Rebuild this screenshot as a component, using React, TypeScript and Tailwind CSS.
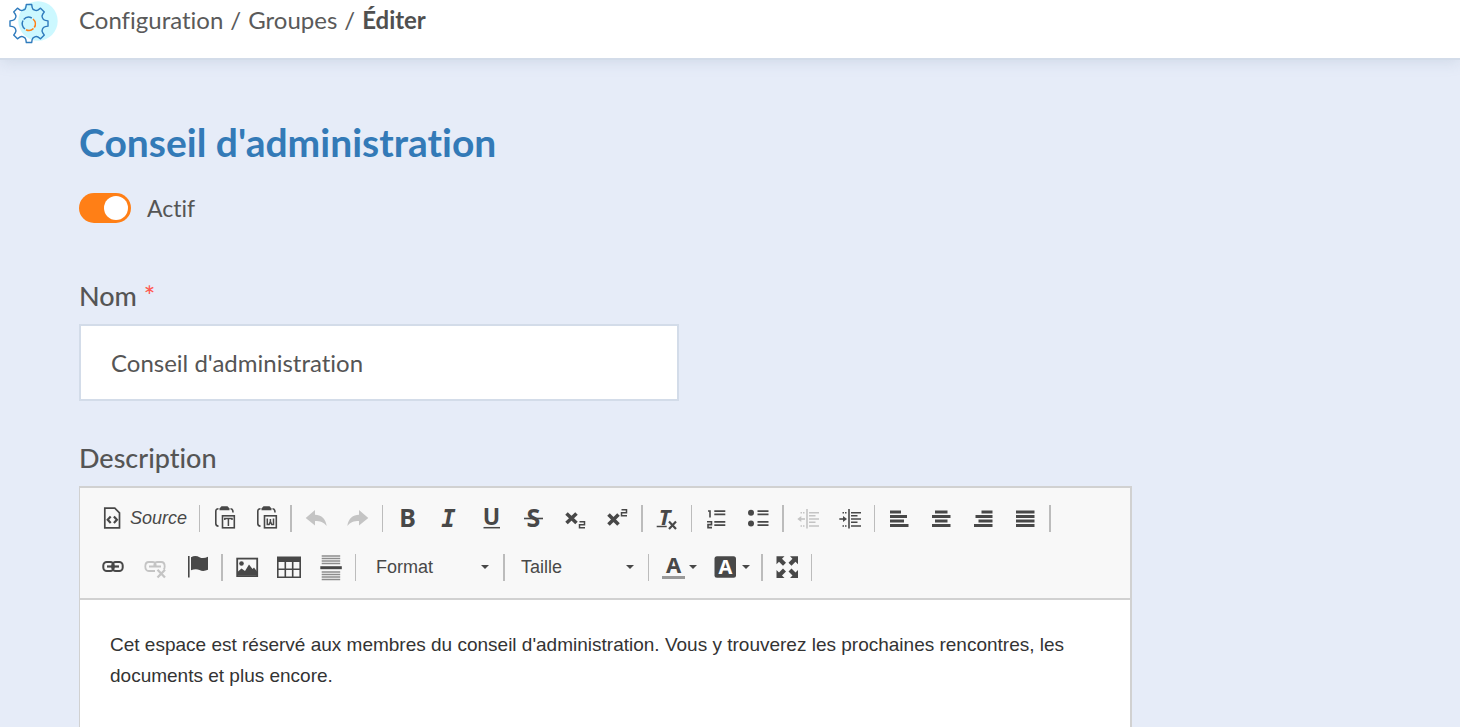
import type { ReactNode } from "react";

interface IconProps {
  children: ReactNode;
}

const Icon = ({ children }: IconProps) => (
  <svg
    viewBox="0 0 24 24"
    className="h-6 w-6 shrink-0 overflow-visible"
    fill="none"
    stroke="currentColor"
    strokeWidth="1.6"
    aria-hidden="true"
  >
    {children}
  </svg>
);

interface GlyphProps {
  x: number;
  y: number;
  size: number;
  italic?: boolean;
  mono?: boolean;
  fill?: string;
  children: ReactNode;
}

const Glyph = ({ x, y, size, italic, mono, fill = "currentColor", children }: GlyphProps) => (
  <text
    x={x}
    y={y}
    fontSize={size}
    fontWeight="700"
    fontStyle={italic ? "italic" : "normal"}
    fontFamily={mono ? "'DejaVu Sans Mono', monospace" : "'Noto Sans', 'Open Sans', sans-serif"}
    textAnchor="middle"
    fill={fill}
    stroke="none"
  >
    {children}
  </text>
);

interface ToolProps {
  label: string;
  disabled?: boolean;
  children: ReactNode;
}

const Tool = ({ label, disabled, children }: ToolProps) => (
  <button
    type="button"
    aria-label={label}
    disabled={disabled}
    className="flex h-10 w-[42px] shrink-0 items-center justify-center text-[#484848] disabled:text-[#c4c4c4]"
  >
    <Icon>{children}</Icon>
  </button>
);

const Separator = () => (
  <span className="flex w-[7px] shrink-0 justify-center">
    <span className="h-[27px] w-px bg-[#bcbcbc]" />
  </span>
);

const WideSeparator = () => (
  <span className="flex w-2 shrink-0 justify-center">
    <span className="h-[27px] w-0.5 bg-[#bcbcbc]" />
  </span>
);

const Caret = () => (
  <svg viewBox="0 0 8 4" className="h-1 w-2 shrink-0" fill="#484848" aria-hidden="true">
    <path d="M0 0h8L4 4z" />
  </svg>
);

const Combo = ({ label }: { label: string }) => (
  <div className="relative h-10 w-[137px] shrink-0">
    <select
      aria-label={label}
      className="h-full w-full appearance-none bg-transparent px-[13px] text-lg text-[#484848]"
    >
      <option>{label}</option>
    </select>
    <span className="pointer-events-none absolute inset-y-0 right-[11px] flex items-center">
      <Caret />
    </span>
  </div>
);

/* Shared clipboard outline of the two paste buttons */
const Clipboard = () => (
  <>
    <path d="M6.5 2.8C4.5 2.8 3.8 4 3.8 5.5v12c0 1.6.7 2.6 2.7 2.6" />
    <path d="M18.5 2.8c1.8 0 2.5 1 2.5 3.7" />
    <path d="M7.5 4.3V2.5L9.5.3h6l2 2.2v1.8z" fill="currentColor" stroke="none" />
    <rect x="10.5" y="9.8" width="11.8" height="12" />
  </>
);

const ListLines = ({ x }: { x: number }) => (
  <path
    d={`M${x} 5.2h11M${x} 8.4h11M${x} 15.8h11M${x} 19.2h11`}
    strokeWidth="1.7"
  />
);

const IndentLines = () => (
  <>
    <path d="M11 3v19.5" />
    <path d="M13 6.7h10M13 9.8h6.5M13 13h10M13 16.3h6.5M13 20h10" strokeWidth="1.5" />
    <path d="M4.5 6.7h5M4.5 20h5" strokeDasharray="1.5 1" />
  </>
);

const polar = (deg: number, r: number) => {
  const rad = (deg * Math.PI) / 180;
  return `${(29 + r * Math.cos(rad)).toFixed(2)} ${(23.5 + r * Math.sin(rad)).toFixed(2)}`;
};

const gearPath =
  "M" +
  [0, 45, 90, 135, 180, 225, 270, 315]
    .map(
      (a) =>
        `${polar(a - 11, 16.5)} L${polar(a - 8, 19.2)} L${polar(a + 8, 19.2)} L${polar(a + 11, 16.5)} Q${polar(a + 14, 14.5)} ${polar(a + 22.5, 14.6)} Q${polar(a + 31, 14.5)} ${polar(a + 34, 16.5)}`
    )
    .join(" L") +
  "Z";

const Logo = () => (
  <svg viewBox="0 0 60 44" className="h-11 w-[60px] shrink-0" fill="none" aria-hidden="true">
    <circle cx="38" cy="21" r="19.7" fill="#ccf8ff" />
    <path d={gearPath} stroke="#2f7bbd" strokeWidth="1.4" strokeLinejoin="round" />
    <path
      d="M25 29A6.5 6.5 0 0 1 23 20.5M23.7 19.5A6.5 6.5 0 0 1 31.8 18"
      stroke="#2f7bbd"
      strokeWidth="1.5"
    />
    <path
      d="M33 19A6.5 6.5 0 0 1 34.3 27.5M33.5 28.5A6.5 6.5 0 0 1 26 29.7"
      stroke="#ff7f16"
      strokeWidth="1.6"
    />
  </svg>
);

const Header = () => (
  <header className="flex h-[60px] shrink-0 items-start border-b-2 border-[#d3dce9] bg-white shadow-[0_2px_14px_rgba(120,140,170,0.2)]">
    <Logo />
    <nav
      aria-label="Fil d'Ariane"
      className="flex h-10 items-center gap-[7px] pl-[19px] text-2xl text-[#5a5a5a]"
    >
      <a href="#configuration">Configuration</a>
      <span>/</span>
      <a href="#groupes">Groupes</a>
      <span>/</span>
      <span className="font-bold text-[#505050]">Éditer</span>
    </nav>
  </header>
);

const Toolbar = () => (
  <div
    role="toolbar"
    aria-label="Mise en forme"
    className="border-b-2 border-[#d1d1d1] bg-[#f8f8f8] pt-[5px] pb-[7px] pl-3"
  >
    <div className="flex h-[50px] items-center">
      <button
        type="button"
        className="flex h-10 w-[104px] shrink-0 items-center gap-[6px] pl-2 text-lg text-[#484848] italic"
      >
        <Icon>
          <path d="M4.8 2.2h10l4.7 4.7v15H4.8z" strokeWidth="1.7" />
          <path d="M10.7 10.5l-3 3.2 3 3.2M13.9 10.5l3 3.2-3 3.2" strokeWidth="2.2" />
        </Icon>
        Source
      </button>
      <Separator />
      <Tool label="Coller comme texte">
        <Clipboard />
        <path d="M12.8 14v-1.5H20V14M16.4 12.5V20" strokeWidth="1.5" />
      </Tool>
      <Tool label="Coller depuis Word">
        <Clipboard />
        <path d="M13.3 12.5v6h1.8l1.3-3 1.3 3h1.8v-6M16.4 13v3" strokeWidth="1.5" />
      </Tool>
      <WideSeparator />
      <Tool label="Annuler" disabled>
        <path d="M1.7 12L11 4v4.8c6 0 10.5 3.7 11.7 11.2-3.2-3.8-6.5-5-11.7-5v4.5z" fill="currentColor" stroke="none" />
      </Tool>
      <Tool label="Rétablir" disabled>
        <path d="M22.3 12L13 4v4.8C7 8.8 2.5 12.5 1.3 20c3.2-3.8 6.5-5 11.7-5v4.5z" fill="currentColor" stroke="none" />
      </Tool>
      <Separator />
      <Tool label="Gras">
        <Glyph x={12.5} y={21} size={25}>B</Glyph>
      </Tool>
      <Tool label="Italique">
        <Glyph x={11.5} y={21} size={24} italic mono>I</Glyph>
      </Tool>
      <Tool label="Souligné">
        <Glyph x={12.5} y={18.5} size={23}>U</Glyph>
        <path d="M4.5 21.7H21" strokeWidth="1.5" />
      </Tool>
      <Tool label="Barré">
        <Glyph x={12.5} y={21} size={25}>S</Glyph>
        <path d="M3 12.5h19" />
      </Tool>
      <Tool label="Indice">
        <path d="M3.5 7.5l10 9.5M13.5 7.5l-10 9.5" strokeWidth="3.6" />
        <path d="M16.5 15.8h5v2.9h-5v3H22" strokeWidth="1.5" />
      </Tool>
      <Tool label="Exposant">
        <path d="M3.5 8.5l10 10M13.5 8.5l-10 10" strokeWidth="3.6" />
        <path d="M16.5 3.8h5v2.9h-5v3H22" strokeWidth="1.5" />
      </Tool>
      <WideSeparator />
      <Tool label="Supprimer la mise en forme">
        <Glyph x={9.5} y={18.5} size={22} italic>T</Glyph>
        <path d="M1.7 20.5h10" strokeWidth="1.5" />
        <path d="M14 15.5l7 7.5M21 15.5L14 23" strokeWidth="2.2" />
      </Tool>
      <Separator />
      <Tool label="Liste numérotée">
        <path d="M4 5h2v6.5M3 15.8h4.5v2.8H4v3h4" />
        <ListLines x={10.3} />
      </Tool>
      <Tool label="Liste à puces">
        <circle cx="5" cy="6.8" r="3" fill="currentColor" stroke="none" />
        <circle cx="5" cy="17.5" r="3" fill="currentColor" stroke="none" />
        <ListLines x={11.5} />
      </Tool>
      <WideSeparator />
      <Tool label="Diminuer le retrait" disabled>
        <IndentLines />
        <path d="M3 13h6" />
        <path d="M1.3 13l4-3v6z" fill="currentColor" stroke="none" />
      </Tool>
      <Tool label="Augmenter le retrait">
        <IndentLines />
        <path d="M1.3 13H7" />
        <path d="M9 13l-4-3v6z" fill="currentColor" stroke="none" />
      </Tool>
      <Separator />
      <Tool label="Aligner à gauche">
        <path d="M3 6h11M3 10.5h17M3 15h14M3 19.5h18.5" strokeWidth="3" />
      </Tool>
      <Tool label="Centrer">
        <path d="M6 6h12.5M3 10.5h18.5M6 15h12.5M3 19.5h18.5" strokeWidth="3" />
      </Tool>
      <Tool label="Aligner à droite">
        <path d="M10.5 6h11M4.5 10.5h17M7.5 15h14M3 19.5h18.5" strokeWidth="3" />
      </Tool>
      <Tool label="Justifier">
        <path d="M3 6h18.5M3 10.5h18.5M3 15h18.5M3 19.5h18.5" strokeWidth="3" />
      </Tool>
      <WideSeparator />
    </div>

    <div className="flex h-12 items-center">
      <Tool label="Lien">
        <rect x="2.3" y="7" width="10.5" height="9" rx="3.5" strokeWidth="2" />
        <rect x="11.2" y="7" width="10.5" height="9" rx="3.5" strokeWidth="2" />
        <path d="M6 11.5h12" strokeWidth="2.2" />
      </Tool>
      <Tool label="Supprimer le lien" disabled>
        <path
          d="M12 16H5.8C3.5 16 2.3 14 2.3 11.5S3.5 7 5.8 7h3.5c2.3 0 3.5 2 3.5 4.5M11.2 11.5C11.2 9 12.4 7 14.7 7h3.5c2.3 0 3.5 2 3.5 4.5 0 1.5-.5 2.5-1 3M6 11.5h12"
          strokeWidth="1.8"
        />
        <path d="M14.5 14.8l7.5 7.7M22 14.8l-7.5 7.7" strokeWidth="2.3" />
      </Tool>
      <Tool label="Ancre">
        <path d="M3.8 1v21.5" />
        <path d="M6 2.2c3-1.6 6-1.4 8.5 0s5.5 1 8.5-.4v13c-3 1.3-6 1.5-8.5.2s-5.5-1-8.5.2z" fill="currentColor" stroke="none" />
      </Tool>
      <WideSeparator />
      <Tool label="Image">
        <rect x="2.2" y="3.6" width="20" height="17.5" strokeWidth="1.8" />
        <circle cx="6.5" cy="8.5" r="2.3" fill="currentColor" stroke="none" />
        <path d="M3 20.5v-4l3.5-3 3.5 2.5 4-6.5 3.5 4.5 1.5-1.5 3 4v4z" fill="currentColor" stroke="none" />
      </Tool>
      <Tool label="Tableau">
        <path d="M0 1.5h24V7H0z" fill="currentColor" stroke="none" />
        <path d="M.8 5v17.2h22.4V5M8.3 6v16M15.7 6v16M0 14.3h24" />
      </Tool>
      <Tool label="Saut de page">
        <path
          d="M2.7 1h18.5M2.7 3.5h18.5M2.7 6h18.5M2.7 8.5h18.5M2.7 17h18.5M2.7 19.5h18.5M2.7 22h18.5M2.7 24.5h18.5"
          stroke="#8d8d8d"
          strokeWidth="1.3"
        />
        <path d="M1.3 12.7h21.5" strokeWidth="3" />
      </Tool>
      <Separator />
      <div className="pl-1">
        <Combo label="Format" />
      </div>
      <WideSeparator />
      <Combo label="Taille" />
      <Separator />
      <button
        type="button"
        aria-label="Couleur du texte"
        className="flex h-10 w-[53px] shrink-0 items-center gap-1 pl-[9px] text-[#484848]"
      >
        <Icon>
          <Glyph x={12.5} y={18} size={22}>A</Glyph>
          <path d="M1 22.5h23" stroke="#999" strokeWidth="3" />
        </Icon>
        <Caret />
      </button>
      <button
        type="button"
        aria-label="Couleur d'arrière-plan"
        className="flex h-10 w-[53px] shrink-0 items-center gap-1 pl-[9px] text-[#484848]"
      >
        <Icon>
          <rect x=".5" y="1.3" width="21.5" height="21.5" rx="2.5" fill="currentColor" stroke="none" />
          <Glyph x={11.3} y={19} size={20} fill="#fff">A</Glyph>
        </Icon>
        <Caret />
      </button>
      <WideSeparator />
      <Tool label="Agrandir">
        <path
          d="M1.5 1.3h8L7 3.8l4 4-3 3-4-4-2.5 2.5zM23 1.3h-8l2.5 2.5-4 4 3 3 4-4L23 9.3zM1.5 23h8L7 20.5l4-4-3-3-4 4L1.5 15zM23 23h-8l2.5-2.5-4-4 3-3 4 4L23 15z"
          fill="currentColor"
          stroke="none"
        />
      </Tool>
      <Separator />
    </div>
  </div>
);

const App = () => {
  return (
    <div className="flex min-h-screen flex-col bg-[#e6ecf8] font-['Lato',sans-serif] text-[#555] [font-variant-ligatures:none]">
      <Header />

      <main className="flex flex-1 flex-col px-[79px] pt-[58px]">
        <h1 className="text-[39px] leading-[48px] font-bold text-[#337ab7]">
          Conseil d'administration
        </h1>

        <label className="mt-[26px] flex h-8 items-center gap-4 self-start text-[23px]">
          <input
            type="checkbox"
            defaultChecked
            className="h-[30px] w-[52px] appearance-none rounded-full bg-gray-400 p-[3px] before:block before:h-6 before:w-6 before:rounded-full before:bg-white checked:bg-[#ff7f16] checked:before:ml-[22px]"
          />
          Actif
        </label>

        {/* Nom */}
        <label htmlFor="nom" className="mt-14 text-[27px] leading-8 font-medium">
          Nom <span className="text-[#ff5a52]">*</span>
        </label>
        <input
          id="nom"
          type="text"
          defaultValue="Conseil d'administration"
          className="mt-3 h-[77px] w-full max-w-[600px] border-2 border-[#d3dce9] bg-white px-[30px] text-2xl"
        />

        {/* Description */}
        <label htmlFor="description" className="mt-[41px] text-[27px] leading-8 font-medium">
          Description
        </label>
        <div className="mt-3 flex w-full max-w-[1053px] flex-1 flex-col border-t-2 border-r-2 border-l border-[#d1d1d1] bg-white font-['Liberation_Sans',Arial,sans-serif]">
          <Toolbar />
          <div
            id="description"
            role="textbox"
            aria-label="Description"
            contentEditable
            suppressContentEditableWarning
            className="flex-1 px-[30px] pt-[29px] text-[19px] leading-[31px] text-[#333]"
          >
            <p>
              Cet espace est réservé aux membres du conseil d'administration. Vous y trouverez
              les prochaines rencontres, les documents et plus encore.
            </p>
          </div>
        </div>
      </main>
    </div>
  );
};

export default App;
